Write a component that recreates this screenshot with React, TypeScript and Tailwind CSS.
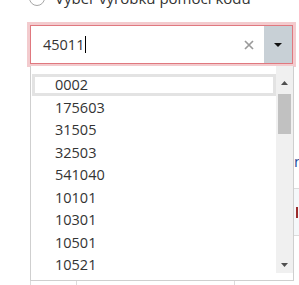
export default function App() {
  const items = [
    "0002",
    "175603",
    "31505",
    "32503",
    "541040",
    "10101",
    "10301",
    "10501",
    "10521",
  ];
  return (
    <div className="relative w-[299px] h-[285px] overflow-hidden bg-white font-['Open_Sans',sans-serif] text-[15px] text-[#333]">
      {/* radio row (cut at top) */}
      <div className="flex items-center ml-[29px] -mt-[13px] h-[22px] gap-[10px]">
        <span className="block w-[16px] h-[16px] rounded-full border border-[#a6a6a6] bg-white shrink-0" />
        <span className="leading-[22px] whitespace-nowrap">Výběr výrobku pomocí kódu</span>
      </div>

      {/* combobox input */}
      <div className="ml-[30px] mt-[16px] w-[263px] h-[39px] border border-[#e0787f] shadow-[0_0_0_3px_#f3cbce] flex items-stretch bg-white">
        <div className="flex-1 flex items-center pl-[12px]">
          <span className="leading-[22px] text-[14.5px] text-[#333]">45011</span>
          <span className="block w-px h-[17px] bg-black ml-[1px]" />
        </div>
        <div className="flex items-center pr-[10px]">
          <svg width="10" height="10" viewBox="0 0 10 10">
            <path d="M1 1 L9 9 M9 1 L1 9" stroke="#9a9a9a" strokeWidth="1.7" fill="none" />
          </svg>
        </div>
        <div className="w-[28px] bg-[#c8d0d6] flex items-center justify-center">
          <svg width="8" height="4" viewBox="0 0 8 4">
            <polygon points="0,0 8,0 4,4" fill="#111" />
          </svg>
        </div>
      </div>

      {/* background table (partly covered by the dropdown) */}
      <div className="ml-[30px] mt-[76px] w-[300px] border-l border-[#dcdcdc]">
        <div className="flex h-[49px] border-b border-[#dcdcdc]">
          <div className="w-[46px] border-r border-[#dcdcdc]" />
          <div className="w-[158px] border-r border-[#dcdcdc]" />
          <div className="flex-1 pl-[59px] pt-[10px]">
            <span className="leading-[22px] text-[#1f4e99] whitespace-nowrap">n</span>
          </div>
        </div>
        <div className="flex h-[47px] border-b border-[#dcdcdc] bg-[#f5f8fa]">
          <div className="w-[46px] border-r border-[#dcdcdc]" />
          <div className="w-[158px] border-r border-[#dcdcdc]" />
          <div className="flex-1 pl-[61px] pt-[18px]">
            <span className="block w-[2px] h-[11px] bg-[#9b2c2c]" />
          </div>
        </div>
        <div className="flex h-[60px]">
          <div className="w-[46px] border-r border-[#dcdcdc]" />
          <div className="w-[158px] border-r border-[#dcdcdc]" />
          <div className="flex-1" />
        </div>
      </div>

      {/* dropdown list overlay */}
      <div className="absolute left-[30px] top-[66px] w-[264px] h-[215px] bg-white border-x border-b border-[#cfcfcf]">
        <div className="flex h-[207px]">
          <div className="w-[245px] pl-[1px] pt-[7.75px] overflow-hidden text-[14.5px]">
            {items.map((it, i) => (
              <div
                key={it}
                className={
                  i === 0
                    ? "h-[22.5px] flex items-center border-[3px] border-[#e3e3e3] pl-[20px] leading-[16px]"
                    : "h-[22.5px] flex items-center border-[3px] border-transparent pl-[20px] leading-[16px]"
                }
              >
                {it}
              </div>
            ))}
          </div>
          <div className="w-[17px] bg-[#f0f0f0] flex flex-col items-center pt-[8px]">
            <div className="h-[17px] w-full flex items-center justify-center">
              <svg width="7" height="4" viewBox="0 0 7 4">
                <polygon points="3.5,0 7,4 0,4" fill="#505050" />
              </svg>
            </div>
            <div className="mt-[3px] w-[13px] h-[40px] bg-[#c1c1c1]" />
            <div className="flex-1" />
            <div className="h-[17px] w-full flex items-center justify-center">
              <svg width="7" height="4" viewBox="0 0 7 4">
                <polygon points="0,0 7,0 3.5,4" fill="#505050" />
              </svg>
            </div>
          </div>
        </div>
      </div>
    </div>
  );
}
